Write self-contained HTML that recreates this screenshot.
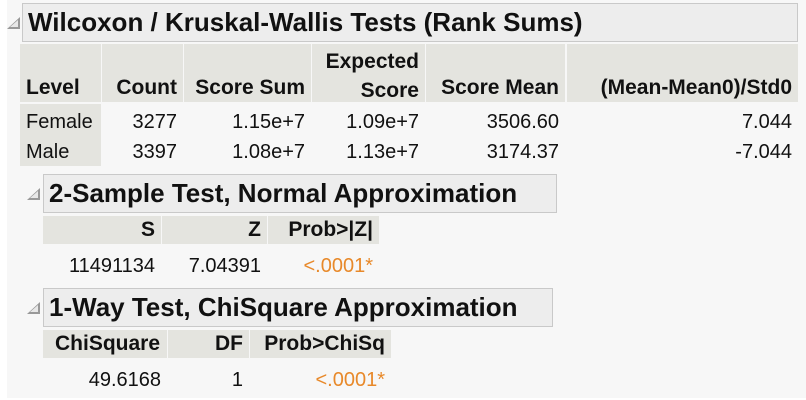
<!DOCTYPE html>
<html><head><meta charset="utf-8"><style>
body{margin:0;width:806px;height:400px;background:#fff;position:relative;overflow:hidden;font-family:"Liberation Sans",sans-serif;color:#111}
.a{position:absolute}
.panel{left:7px;top:0;width:799px;height:398px;background:#f7f7f7}
.box{background:#ededed;border:1px solid #c9c9c9;box-sizing:border-box;font-weight:bold;font-size:26px;padding-left:5px;line-height:37px;white-space:nowrap}
.h{background:#e4e4df;font-weight:bold;font-size:21px;box-sizing:border-box;text-align:right;padding-right:6px;white-space:nowrap}
.t{font-size:20px;white-space:nowrap}
.r{text-align:right}
.o{color:#e8892a}
.tri{width:0;height:0;border-left:13px solid transparent;border-bottom:12px solid #999}
.tri:after{content:"";position:absolute;left:-10px;top:3px;border-left:8px solid transparent;border-bottom:7px solid #e8e8e8}
</style></head><body>
<div class="a panel"></div>
<div class="a tri" style="left:7px;top:17px"></div>
<div class="a box" style="left:22px;top:3px;width:776px;height:39px">Wilcoxon / Kruskal-Wallis Tests (Rank Sums)</div>

<div class="a h" style="left:20px;top:44px;width:81px;height:58px;text-align:left;padding-left:6px;padding-top:32px">Level</div>
<div class="a h" style="left:102px;top:44px;width:81px;height:58px;padding-top:32px">Count</div>
<div class="a h" style="left:184px;top:44px;width:127px;height:58px;padding-top:32px">Score Sum</div>
<div class="a h" style="left:312px;top:44px;width:113px;height:58px;padding-top:3px;line-height:29px">Expected<br>Score</div>
<div class="a h" style="left:426px;top:44px;width:139px;height:58px;padding-top:32px">Score Mean</div>
<div class="a h" style="left:567px;top:44px;width:231px;height:58px;padding-top:32px">(Mean-Mean0)/Std0</div>
<div class="a" style="left:20px;top:104px;width:81px;height:62px;background:#e4e4df"></div>

<div class="a t" style="left:26px;top:111px">Female</div>
<div class="a t" style="left:26px;top:141px">Male</div>
<div class="a t r" style="left:102px;top:111px;width:75px">3277</div>
<div class="a t r" style="left:102px;top:141px;width:75px">3397</div>
<div class="a t r" style="left:184px;top:111px;width:121px">1.15e+7</div>
<div class="a t r" style="left:184px;top:141px;width:121px">1.08e+7</div>
<div class="a t r" style="left:312px;top:111px;width:107px">1.09e+7</div>
<div class="a t r" style="left:312px;top:141px;width:107px">1.13e+7</div>
<div class="a t r" style="left:426px;top:111px;width:133px">3506.60</div>
<div class="a t r" style="left:426px;top:141px;width:133px">3174.37</div>
<div class="a t r" style="left:567px;top:111px;width:225px">7.044</div>
<div class="a t r" style="left:567px;top:141px;width:225px">-7.044</div>

<div class="a tri" style="left:27px;top:188px"></div>
<div class="a box" style="left:43px;top:174px;width:514px;height:39px">2-Sample Test, Normal Approximation</div>
<div class="a h" style="left:43px;top:216px;width:118px;height:28px;line-height:28px">S</div>
<div class="a h" style="left:162px;top:216px;width:105px;height:28px;line-height:28px">Z</div>
<div class="a h" style="left:268px;top:216px;width:111px;height:28px;line-height:28px">Prob&gt;|Z|</div>
<div class="a t r" style="left:43px;top:255px;width:112px">11491134</div>
<div class="a t r" style="left:162px;top:255px;width:99px">7.04391</div>
<div class="a t r o" style="left:268px;top:255px;width:105px">&lt;.0001*</div>

<div class="a tri" style="left:27px;top:302px"></div>
<div class="a box" style="left:43px;top:288px;width:510px;height:39px">1-Way Test, ChiSquare Approximation</div>
<div class="a h" style="left:43px;top:330px;width:124px;height:28px;line-height:28px;text-align:left;padding-left:12px">ChiSquare</div>
<div class="a h" style="left:168px;top:330px;width:81px;height:28px;line-height:28px">DF</div>
<div class="a h" style="left:250px;top:330px;width:141px;height:28px;line-height:28px">Prob&gt;ChiSq</div>
<div class="a t r" style="left:43px;top:369px;width:118px">49.6168</div>
<div class="a t r" style="left:168px;top:369px;width:75px">1</div>
<div class="a t r o" style="left:250px;top:369px;width:135px">&lt;.0001*</div>
</body></html>
